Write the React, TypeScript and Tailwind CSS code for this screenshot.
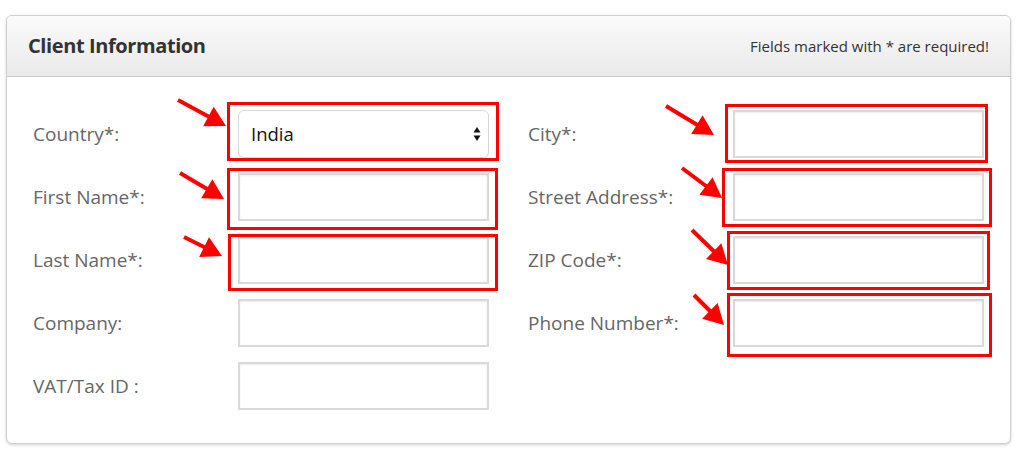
import React from "react";

type Box = [number, number, number, number];
type Arrow = [number, number, number, number];

// red annotation boxes (outer edges) and arrows (start -> tip)
const boxes: Box[] = [
  [227, 102, 499, 161],
  [227, 168, 498, 230],
  [228, 234, 498, 291],
  [725, 104, 988, 163],
  [722, 168, 992, 227],
  [727, 231, 990, 290],
  [727, 293, 992, 357],
];

const arrows: Arrow[] = [
  [178, 100, 226, 126],
  [180, 173, 224, 199],
  [184, 237, 222, 256],
  [666, 106, 714, 135],
  [682, 168, 722, 198],
  [692, 230, 728, 265],
  [694, 295, 724, 325],
];

const headPoints = ([x1, y1, x2, y2]: Arrow) => {
  const dx = x2 - x1;
  const dy = y2 - y1;
  const len = Math.hypot(dx, dy);
  const ux = dx / len;
  const uy = dy / len;
  const bx = x2 - ux * 20;
  const by = y2 - uy * 20;
  const w = 11;
  return `${x2},${y2} ${bx - uy * w},${by + ux * w} ${bx + uy * w},${by - ux * w}`;
};

const Field = ({ label, select }: { label: string; select?: boolean }) => (
  <div className="flex items-center h-[48px]">
    <label className="w-[205px] shrink-0 text-[19px] text-[#666]">{label}</label>
    {select ? (
      <div className="flex items-center justify-between w-[251px] h-[48px] rounded-[6px] border border-[#d6d6d6] bg-white pl-3 pr-[7px] shadow-[0_1px_1px_rgba(0,0,0,0.06)]">
        <span className="text-[18.5px] text-[#111]">India</span>
        <svg width="8" height="16" viewBox="0 0 8 16">
          <polygon points="4,1 7.5,6.5 0.5,6.5" fill="#111" />
          <polygon points="4,15 7.5,9.5 0.5,9.5" fill="#111" />
        </svg>
      </div>
    ) : (
      <div className="w-[251px] h-[48px] border-2 border-[#d9d9d9] bg-white shadow-[inset_0_1px_2px_rgba(0,0,0,0.08)]" />
    )}
  </div>
);

export default function App() {
  return (
    <div className="relative w-[1024px] h-[457px] bg-white" style={{ fontFamily: '"Open Sans", sans-serif' }}>
      <div className="pt-[15px] pl-[6px] pr-[13px]">
        <div className="rounded-[6px] border border-[#cfcfcf] bg-white shadow-[0_1px_3px_rgba(0,0,0,0.18)] overflow-hidden">
          {/* Header */}
          <div className="flex items-center justify-between h-[61px] pl-[21px] pr-[21px] border-b border-[#c8c8c8] bg-gradient-to-b from-[#fbfbfb] to-[#e9e9e9]">
            <h2 className="text-[20px] font-bold text-[#333] tracking-[-0.4px]">Client Information</h2>
            <span className="text-[15px] text-[#333]">Fields marked with * are required!</span>
          </div>

          {/* Form */}
          <div className="flex gap-[39px] pl-[26px] pt-[33px] pb-[33px]">
            <div className="flex flex-col gap-[15px]">
              <Field label="Country*:" select />
              <Field label="First Name*:" />
              <Field label="Last Name*:" />
              <Field label="Company:" />
              <Field label="VAT/Tax ID :" />
            </div>
            <div className="flex flex-col gap-[15px]">
              <Field label="City*:" />
              <Field label="Street Address*:" />
              <Field label="ZIP Code*:" />
              <Field label="Phone Number*:" />
            </div>
          </div>
        </div>
      </div>

      {/* Annotations */}
      <svg className="absolute inset-0 pointer-events-none" width="1024" height="457">
        {boxes.map(([x1, y1, x2, y2], i) => (
          <rect key={i} x={x1 + 1.5} y={y1 + 1.5} width={x2 - x1 - 3} height={y2 - y1 - 3} fill="none" stroke="#ff0000" strokeWidth="3" />
        ))}
        {arrows.map((a, i) => (
          <g key={i}>
            <line x1={a[0]} y1={a[1]} x2={a[2] - (a[2] - a[0]) * 0.25} y2={a[3] - (a[3] - a[1]) * 0.25} stroke="#ff0000" strokeWidth="4" />
            <polygon points={headPoints(a)} fill="#ff0000" />
          </g>
        ))}
      </svg>
    </div>
  );
}
